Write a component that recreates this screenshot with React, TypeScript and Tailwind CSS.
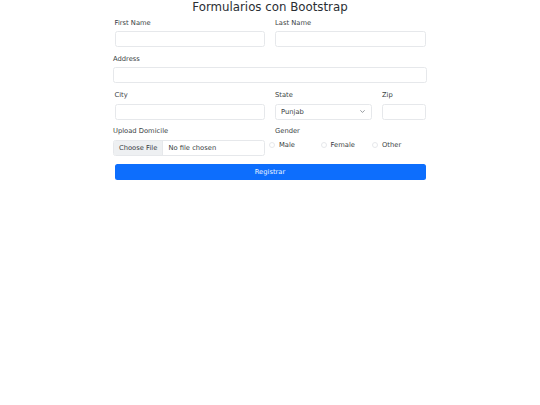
export default function App() {
  return (
    <div className="w-[540px] h-[405px] bg-white font-['DejaVu_Sans',sans-serif] text-[#3a3f44] text-[6.75px] leading-[10.125px]">
      <h3 className="text-center text-[11.8px] leading-[14.2px] font-normal text-[#2a2e33] mb-[3.4px]">
        Formularios con Bootstrap
      </h3>
      <form className="ml-[113px] w-[314px]">
        <div className="flex gap-[10px] px-[1.5px] mb-[6.75px]">
          <div className="w-[150.5px]">
            <label className="block mb-[3.4px]">First Name</label>
            <input className="block w-full h-[16px] border border-[#e6e8eb] rounded-[2.5px] bg-white" />
          </div>
          <div className="w-[150.5px]">
            <label className="block mb-[3.4px]">Last Name</label>
            <input className="block w-full h-[16px] border border-[#e6e8eb] rounded-[2.5px] bg-white" />
          </div>
        </div>

        <div className="mb-[6.75px]">
          <label className="block mb-[3.4px]">Address</label>
          <input className="block w-full h-[16px] border border-[#e6e8eb] rounded-[2.5px] bg-white" />
        </div>

        <div className="flex gap-[10px] px-[1.5px] mb-[6.75px]">
          <div className="w-[150.5px]">
            <label className="block mb-[3.4px]">City</label>
            <input className="block w-full h-[16px] border border-[#e6e8eb] rounded-[2.5px] bg-white" />
          </div>
          <div className="w-[97px]">
            <label className="block mb-[3.4px]">State</label>
            <div className="flex items-center justify-between h-[16px] border border-[#e6e8eb] rounded-[2.5px] bg-white pl-[5px] pr-[6px]">
              <span>Punjab</span>
              <svg width="5" height="5" viewBox="0 0 16 16" fill="none" stroke="#5a6066" strokeWidth="2" strokeLinecap="round" strokeLinejoin="round">
                <path d="m2 5 6 6 6-6" />
              </svg>
            </div>
          </div>
          <div className="w-[43.5px]">
            <label className="block mb-[3.4px]">Zip</label>
            <input className="block w-full h-[16px] border border-[#e6e8eb] rounded-[2.5px] bg-white" />
          </div>
        </div>

        <div className="flex gap-[10px] mb-[8.2px]">
          <div className="w-[152px]">
            <label className="block mb-[3.4px]">Upload Domicile</label>
            <div className="flex h-[16px] border border-[#e6e8eb] rounded-[2.5px] bg-white overflow-hidden">
              <span className="flex items-center px-[5px] bg-[#eef0f2] border-r border-[#e6e8eb]">Choose File</span>
              <span className="flex items-center pl-[5px]">No file chosen</span>
            </div>
          </div>
          <div>
            <label className="block mb-[3.4px]">Gender</label>
            <div className="flex -ml-[6px] h-[10.125px]">
              {['Male', 'Female', 'Other'].map((g) => (
                <label key={g} className="flex items-center gap-[4px] w-[51.5px]">
                  <span className="block w-[6px] h-[6px] rounded-full border border-[#e6e8eb] bg-white" />
                  <span>{g}</span>
                </label>
              ))}
            </div>
          </div>
        </div>

        <div className="px-[1.5px]">
          <button
            type="button"
            className="block w-full h-[16px] bg-[#0d6efd] text-[#eef4ff] rounded-[2.5px] text-[6.75px] leading-[10.125px]"
          >
            Registrar
          </button>
        </div>
      </form>
    </div>
  )
}
